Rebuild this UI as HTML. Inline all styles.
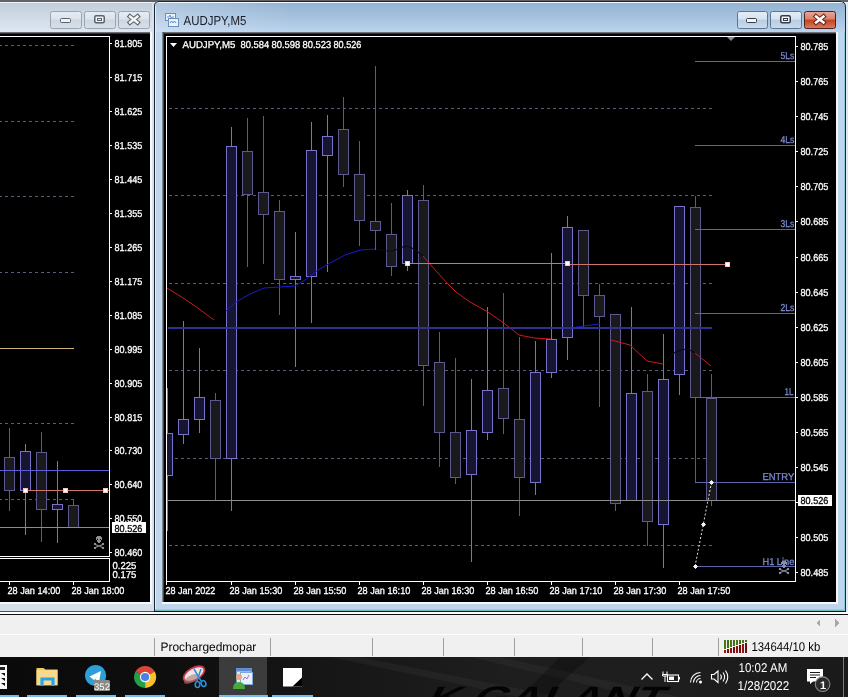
<!DOCTYPE html><html><head><meta charset="utf-8"><style>html,body{margin:0;padding:0;width:848px;height:697px;overflow:hidden;background:#f0f0f0}svg{display:block;will-change:transform}text{font-family:"Liberation Sans",sans-serif;text-rendering:geometricPrecision}</style></head><body>
<svg width="848" height="697" viewBox="0 0 848 697" shape-rendering="crispEdges">
<defs>
<linearGradient id="tbi" x1="0" y1="0" x2="0" y2="1"><stop offset="0" stop-color="#c2cedb"/><stop offset="1" stop-color="#dce7f2"/></linearGradient>
<linearGradient id="tba" x1="0" y1="0" x2="0" y2="1"><stop offset="0" stop-color="#93b4d3"/><stop offset="0.5" stop-color="#a6c2de"/><stop offset="1" stop-color="#bad4ee"/></linearGradient><linearGradient id="tbal" x1="0" y1="0" x2="1" y2="0"><stop offset="0" stop-color="#ffffff" stop-opacity="0.25"/><stop offset="1" stop-color="#ffffff" stop-opacity="0"/></linearGradient>
<linearGradient id="btn" x1="0" y1="0" x2="0" y2="1"><stop offset="0" stop-color="#e6eef7"/><stop offset="0.45" stop-color="#d5e2f0"/><stop offset="0.5" stop-color="#b8cde3"/><stop offset="1" stop-color="#cadbed"/></linearGradient>
<linearGradient id="btni" x1="0" y1="0" x2="0" y2="1"><stop offset="0" stop-color="#e6ecf2"/><stop offset="0.45" stop-color="#dbe3ec"/><stop offset="0.5" stop-color="#cdd7e2"/><stop offset="1" stop-color="#d7e0ea"/></linearGradient>
<linearGradient id="cls" x1="0" y1="0" x2="0" y2="1"><stop offset="0" stop-color="#eaa898"/><stop offset="0.45" stop-color="#d88068"/><stop offset="0.5" stop-color="#c4421e"/><stop offset="1" stop-color="#dc7c60"/></linearGradient>
<linearGradient id="tbar" x1="0" y1="0" x2="1" y2="0"><stop offset="0" stop-color="#0a0a0a"/><stop offset="0.2" stop-color="#0e0e0e"/><stop offset="0.38" stop-color="#161616"/><stop offset="0.6" stop-color="#1e1e1e"/><stop offset="0.8" stop-color="#1e1e1e"/><stop offset="1" stop-color="#1a1a1a"/></linearGradient>
<linearGradient id="shade" x1="0" y1="0" x2="0" y2="1"><stop offset="0" stop-color="#8a9098"/><stop offset="1" stop-color="#101010"/></linearGradient>
<linearGradient id="shadeR" x1="0" y1="0" x2="1" y2="0"><stop offset="0" stop-color="#9aa6b4"/><stop offset="1" stop-color="#20242a"/></linearGradient>
</defs>
<rect x="0" y="0" width="848" height="2" fill="#60646a" />
<rect x="0" y="2" width="154" height="610" fill="#d6e0ea" />
<rect x="0" y="2" width="154" height="1" fill="#f2f5f8" />
<rect x="0" y="3" width="152" height="29" fill="url(#tbi)" />
<rect x="0" y="32" width="150" height="2" fill="url(#shade)" />
<rect x="0" y="34" width="150" height="568" fill="#000" />
<rect x="150" y="32" width="2" height="572" fill="#f6f8fb" />
<rect x="0" y="602" width="152" height="2" fill="#f6f8fb" />
<rect x="152" y="2" width="2" height="610" fill="#d8e2ec" />
<rect x="154" y="6" width="1" height="606" fill="#202428" />
<rect x="0" y="611" width="154" height="1" fill="#4a5058" />
<rect x="50.5" y="11.5" width="31" height="17" rx="2" fill="url(#btni)" stroke="#9aa4b0" shape-rendering="auto"/>
<rect x="84.5" y="11.5" width="31" height="17" rx="2" fill="url(#btni)" stroke="#9aa4b0" shape-rendering="auto"/>
<rect x="118.5" y="11.5" width="31" height="17" rx="2" fill="url(#btni)" stroke="#9aa4b0" shape-rendering="auto"/>
<rect x="60.5" y="18.5" width="10" height="4" rx="1" fill="#f2f2f2" stroke="#5a626c" shape-rendering="auto"/>
<rect x="94.75" y="15.75" width="9.5" height="7" rx="1.5" fill="#f2f2f2" stroke="#5a626c" stroke-width="1.5" shape-rendering="auto"/><rect x="97.5" y="18.5" width="4" height="2" fill="none" stroke="#5a626c" stroke-width="1" shape-rendering="auto"/>
<path d="M130 16.5 L137.5 22.5 M137.5 16.5 L130 22.5" stroke="#5a626c" stroke-width="4.6" stroke-linecap="square" shape-rendering="auto"/><path d="M130 16.5 L137.5 22.5 M137.5 16.5 L130 22.5" stroke="#f6f6f6" stroke-width="2.4" stroke-linecap="square" shape-rendering="auto"/>
<rect x="0" y="36" width="110" height="1" fill="#ffffff" />
<rect x="109" y="36" width="1" height="521" fill="#ffffff" />
<rect x="0" y="556" width="110" height="1" fill="#ffffff" />
<rect x="0" y="558" width="110" height="1" fill="#ffffff" />
<rect x="109" y="558" width="1" height="24" fill="#ffffff" />
<rect x="0" y="581" width="110" height="1" fill="#ffffff" />
<line x1="-1" y1="45.5" x2="75" y2="45.5" stroke="#5c5c7a" stroke-width="1" stroke-dasharray="3 3"/>
<line x1="-1" y1="121.5" x2="75" y2="121.5" stroke="#5c5c7a" stroke-width="1" stroke-dasharray="3 3"/>
<line x1="-1" y1="196.5" x2="75" y2="196.5" stroke="#5c5c7a" stroke-width="1" stroke-dasharray="3 3"/>
<line x1="-1" y1="272.5" x2="75" y2="272.5" stroke="#5c5c7a" stroke-width="1" stroke-dasharray="3 3"/>
<line x1="-1" y1="348.5" x2="75" y2="348.5" stroke="#5c5c7a" stroke-width="1" stroke-dasharray="3 3"/>
<line x1="-1" y1="423.5" x2="75" y2="423.5" stroke="#5c5c7a" stroke-width="1" stroke-dasharray="3 3"/>
<line x1="-1" y1="499.5" x2="75" y2="499.5" stroke="#5c5c7a" stroke-width="1" stroke-dasharray="3 3"/>
<rect x="0" y="348" width="74" height="1" fill="#d0b47c" />
<rect x="9" y="428" width="1" height="30" fill="#5e5a84" />
<rect x="9" y="490" width="1" height="21" fill="#5e5a84" />
<rect x="4" y="457" width="11" height="34" fill="#5e5890" />
<rect x="5" y="458" width="9" height="32" fill="#1a1a1c" />
<rect x="25" y="444" width="1" height="8" fill="#7a72c0" />
<rect x="25" y="490" width="1" height="45" fill="#7a72c0" />
<rect x="20" y="451" width="11" height="40" fill="#7a72c8" />
<rect x="21" y="452" width="9" height="38" fill="#161632" />
<rect x="41" y="432" width="1" height="21" fill="#5e5a84" />
<rect x="41" y="509" width="1" height="33" fill="#5e5a84" />
<rect x="36" y="452" width="11" height="58" fill="#5e5890" />
<rect x="37" y="453" width="9" height="56" fill="#1a1a1c" />
<rect x="57" y="461" width="1" height="44" fill="#7a72c0" />
<rect x="57" y="509" width="1" height="34" fill="#7a72c0" />
<rect x="52" y="504" width="11" height="6" fill="#7a72c8" />
<rect x="53" y="505" width="9" height="4" fill="#161632" />
<rect x="73" y="499" width="1" height="7" fill="#5e5a84" />
<rect x="68" y="505" width="11" height="23" fill="#5e5890" />
<rect x="69" y="506" width="9" height="21" fill="#1a1a1c" />
<rect x="0" y="470" width="109" height="1" fill="#5c5cd8" />
<rect x="25" y="490" width="84" height="1" fill="#d07468" />
<rect x="23" y="488" width="5" height="5" fill="#f0c8c0" />
<rect x="24" y="489" width="3" height="3" fill="#ffffff" />
<rect x="63" y="488" width="5" height="5" fill="#f0c8c0" />
<rect x="64" y="489" width="3" height="3" fill="#ffffff" />
<rect x="103" y="488" width="5" height="5" fill="#f0c8c0" />
<rect x="104" y="489" width="3" height="3" fill="#ffffff" />
<rect x="0" y="527" width="109" height="1" fill="#8c8c8c" />
<rect x="110" y="43" width="2" height="1" fill="#ffffff" />
<rect x="110" y="77" width="2" height="1" fill="#ffffff" />
<rect x="110" y="111" width="2" height="1" fill="#ffffff" />
<rect x="110" y="145" width="2" height="1" fill="#ffffff" />
<rect x="110" y="179" width="2" height="1" fill="#ffffff" />
<rect x="110" y="213" width="2" height="1" fill="#ffffff" />
<rect x="110" y="247" width="2" height="1" fill="#ffffff" />
<rect x="110" y="281" width="2" height="1" fill="#ffffff" />
<rect x="110" y="315" width="2" height="1" fill="#ffffff" />
<rect x="110" y="349" width="2" height="1" fill="#ffffff" />
<rect x="110" y="383" width="2" height="1" fill="#ffffff" />
<rect x="110" y="417" width="2" height="1" fill="#ffffff" />
<rect x="110" y="450" width="2" height="1" fill="#ffffff" />
<rect x="110" y="484" width="2" height="1" fill="#ffffff" />
<rect x="110" y="518" width="2" height="1" fill="#ffffff" />
<rect x="110" y="552" width="2" height="1" fill="#ffffff" />
<rect x="112" y="522" width="34" height="11" fill="#fff" />
<rect x="9" y="582" width="1" height="3" fill="#ffffff" />
<rect x="73" y="582" width="1" height="3" fill="#ffffff" />
<rect x="97" y="536" width="4" height="1" fill="#909090" />
<rect x="96" y="537" width="6" height="3" fill="#909090" />
<rect x="97" y="540" width="4" height="2" fill="#909090" />
<rect x="98" y="542" width="2" height="1" fill="#909090" />
<rect x="97" y="539" width="1" height="1" fill="#000" />
<rect x="100" y="539" width="1" height="1" fill="#000" />
<path d="M94 544 L104 548 M104 544 L94 548" stroke="#909090" stroke-width="1.3" shape-rendering="auto"/>
<rect x="94" y="543" width="2" height="2" fill="#909090" />
<rect x="102" y="543" width="2" height="2" fill="#909090" />
<rect x="94" y="547" width="2" height="2" fill="#909090" />
<rect x="102" y="547" width="2" height="2" fill="#909090" />
<path d="M154 612 L154 6 Q154 1 159 1 L840 1 Q846 1 846 7 L846 612 Z" fill="#bfd5ec" shape-rendering="auto"/>
<rect x="156" y="3" width="689" height="29" fill="url(#tba)" />
<rect x="156" y="3" width="140" height="29" fill="url(#tbal)" />
<rect x="158" y="2" width="684" height="1" fill="#f4f8fc" />
<rect x="155" y="6" width="1" height="605" fill="#e4eef8" />
<rect x="162" y="32" width="674" height="2" fill="url(#shade)" />
<rect x="162" y="32" width="2" height="570" fill="url(#shadeR)" />
<rect x="164" y="34" width="672" height="568" fill="#000" />
<rect x="836" y="32" width="2" height="572" fill="#f6f9fc" />
<rect x="162" y="602" width="676" height="2" fill="#f6f9fc" />
<rect x="155" y="609" width="690" height="1" fill="#a8c8e0" />
<rect x="155" y="610" width="690" height="1" fill="#70bcc4" />
<rect x="844" y="32" width="1" height="579" fill="#90ccd8" />
<path d="M154.5 612 L154.5 6 Q154.5 1.5 159 1.5 L840 1.5 Q845.5 1.5 845.5 7 L845.5 612" fill="none" stroke="#1e2630" shape-rendering="auto"/>
<rect x="154" y="611" width="692" height="1" fill="#081414" />
<rect x="846" y="2" width="2" height="610" fill="#dfe8f1" />
<g shape-rendering="auto"><rect x="165.5" y="13.5" width="10" height="7" fill="#eaf3fc" stroke="#6a90c0"/><path d="M167 17 h2 l1 -2 l1 3 l1 -1 h2" stroke="#5a80b8" fill="none" stroke-width="0.8"/><rect x="168.5" y="18.5" width="10" height="8" fill="#eaf3fc" stroke="#6a90c0"/><path d="M170 23 l1.5 -2 l1.5 2 l1.5 -2 l1.5 2" stroke="#4a70b0" fill="none" stroke-width="0.8"/></g>
<rect x="737.5" y="11.5" width="30" height="17" rx="2" fill="url(#btn)" stroke="#60768e" shape-rendering="auto"/>
<rect x="770.5" y="11.5" width="31" height="17" rx="2" fill="url(#btn)" stroke="#60768e" shape-rendering="auto"/>
<rect x="804.5" y="11.5" width="31" height="17" rx="2" fill="url(#cls)" stroke="#4a2222" shape-rendering="auto"/>
<rect x="746.5" y="18.5" width="10" height="4" rx="1" fill="#f6f6f6" stroke="#333c48" shape-rendering="auto"/>
<rect x="780.75" y="15.75" width="9.5" height="7" rx="1.5" fill="#f4f6f8" stroke="#333c48" stroke-width="1.5" shape-rendering="auto"/><rect x="783.5" y="18.5" width="4" height="2" fill="none" stroke="#333c48" stroke-width="1" shape-rendering="auto"/>
<path d="M816 16.5 L823.5 22.5 M823.5 16.5 L816 22.5" stroke="#6a2a1e" stroke-width="4.6" stroke-linecap="square" shape-rendering="auto"/><path d="M816 16.5 L823.5 22.5 M823.5 16.5 L816 22.5" stroke="#ffffff" stroke-width="2.4" stroke-linecap="square" shape-rendering="auto"/>
<rect x="166" y="36" width="630" height="1" fill="#ffffff" />
<rect x="166" y="36" width="1" height="546" fill="#ffffff" />
<rect x="795" y="36" width="1" height="546" fill="#ffffff" />
<rect x="166" y="581" width="630" height="1" fill="#ffffff" />
<path d="M727 37 L735 37 L731 41 Z" fill="#8a8a8a" shape-rendering="auto"/>
<line x1="169" y1="108.5" x2="712" y2="108.5" stroke="#5c5c7a" stroke-width="1" stroke-dasharray="3 3"/>
<line x1="169" y1="195.5" x2="712" y2="195.5" stroke="#5c5c7a" stroke-width="1" stroke-dasharray="3 3"/>
<line x1="169" y1="283.5" x2="712" y2="283.5" stroke="#5c5c7a" stroke-width="1" stroke-dasharray="3 3"/>
<line x1="169" y1="370.5" x2="712" y2="370.5" stroke="#5c5c7a" stroke-width="1" stroke-dasharray="3 3"/>
<line x1="169" y1="458.5" x2="712" y2="458.5" stroke="#5c5c7a" stroke-width="1" stroke-dasharray="3 3"/>
<line x1="169" y1="545.5" x2="712" y2="545.5" stroke="#5c5c7a" stroke-width="1" stroke-dasharray="3 3"/>
<svg x="167" y="37" width="628" height="544" viewBox="167 37 628 544" overflow="hidden" style="will-change:auto">
<rect x="167" y="388" width="1" height="46" fill="#7a72c0" />
<rect x="167" y="475" width="1" height="56" fill="#7a72c0" />
<rect x="162" y="433" width="11" height="43" fill="#7a72c8" />
<rect x="163" y="434" width="9" height="41" fill="#161632" />
<rect x="183" y="321" width="1" height="99" fill="#7a72c0" />
<rect x="183" y="434" width="1" height="10" fill="#7a72c0" />
<rect x="178" y="419" width="11" height="16" fill="#7a72c8" />
<rect x="179" y="420" width="9" height="14" fill="#161632" />
<rect x="199" y="348" width="1" height="50" fill="#7a72c0" />
<rect x="199" y="419" width="1" height="14" fill="#7a72c0" />
<rect x="194" y="397" width="11" height="23" fill="#7a72c8" />
<rect x="195" y="398" width="9" height="21" fill="#161632" />
<rect x="215" y="393" width="1" height="8" fill="#5e5a84" />
<rect x="215" y="458" width="1" height="43" fill="#5e5a84" />
<rect x="210" y="400" width="11" height="59" fill="#5e5890" />
<rect x="211" y="401" width="9" height="57" fill="#1a1a1c" />
<rect x="231" y="127" width="1" height="20" fill="#7a72c0" />
<rect x="231" y="458" width="1" height="53" fill="#7a72c0" />
<rect x="226" y="146" width="11" height="313" fill="#7a72c8" />
<rect x="227" y="147" width="9" height="311" fill="#161632" />
<rect x="247" y="118" width="1" height="34" fill="#5e5a84" />
<rect x="247" y="194" width="1" height="73" fill="#5e5a84" />
<rect x="242" y="151" width="11" height="44" fill="#5e5890" />
<rect x="243" y="152" width="9" height="42" fill="#1a1a1c" />
<rect x="263" y="116" width="1" height="77" fill="#5e5a84" />
<rect x="263" y="214" width="1" height="50" fill="#5e5a84" />
<rect x="258" y="192" width="11" height="23" fill="#5e5890" />
<rect x="259" y="193" width="9" height="21" fill="#1a1a1c" />
<rect x="279" y="200" width="1" height="12" fill="#5e5a84" />
<rect x="279" y="279" width="1" height="36" fill="#5e5a84" />
<rect x="274" y="211" width="11" height="69" fill="#5e5890" />
<rect x="275" y="212" width="9" height="67" fill="#1a1a1c" />
<rect x="295" y="232" width="1" height="45" fill="#7a72c0" />
<rect x="295" y="279" width="1" height="88" fill="#7a72c0" />
<rect x="290" y="276" width="11" height="4" fill="#7a72c8" />
<rect x="291" y="277" width="9" height="2" fill="#161632" />
<rect x="311" y="122" width="1" height="29" fill="#7a72c0" />
<rect x="311" y="276" width="1" height="47" fill="#7a72c0" />
<rect x="306" y="150" width="11" height="127" fill="#7a72c8" />
<rect x="307" y="151" width="9" height="125" fill="#161632" />
<rect x="327" y="115" width="1" height="22" fill="#7a72c0" />
<rect x="327" y="155" width="1" height="117" fill="#7a72c0" />
<rect x="322" y="136" width="11" height="20" fill="#7a72c8" />
<rect x="323" y="137" width="9" height="18" fill="#161632" />
<rect x="343" y="97" width="1" height="33" fill="#5e5a84" />
<rect x="343" y="174" width="1" height="13" fill="#5e5a84" />
<rect x="338" y="129" width="11" height="46" fill="#5e5890" />
<rect x="339" y="130" width="9" height="44" fill="#1a1a1c" />
<rect x="359" y="141" width="1" height="34" fill="#5e5a84" />
<rect x="359" y="220" width="1" height="26" fill="#5e5a84" />
<rect x="354" y="174" width="11" height="47" fill="#5e5890" />
<rect x="355" y="175" width="9" height="45" fill="#1a1a1c" />
<rect x="375" y="66" width="1" height="156" fill="#5e5a84" />
<rect x="375" y="230" width="1" height="20" fill="#5e5a84" />
<rect x="370" y="221" width="11" height="10" fill="#5e5890" />
<rect x="371" y="222" width="9" height="8" fill="#1a1a1c" />
<rect x="391" y="203" width="1" height="32" fill="#5e5a84" />
<rect x="391" y="266" width="1" height="10" fill="#5e5a84" />
<rect x="386" y="234" width="11" height="33" fill="#5e5890" />
<rect x="387" y="235" width="9" height="31" fill="#1a1a1c" />
<rect x="407" y="190" width="1" height="6" fill="#7a72c0" />
<rect x="407" y="263" width="1" height="8" fill="#7a72c0" />
<rect x="402" y="195" width="11" height="69" fill="#7a72c8" />
<rect x="403" y="196" width="9" height="67" fill="#161632" />
<rect x="423" y="185" width="1" height="16" fill="#5e5a84" />
<rect x="423" y="365" width="1" height="41" fill="#5e5a84" />
<rect x="418" y="200" width="11" height="166" fill="#5e5890" />
<rect x="419" y="201" width="9" height="164" fill="#1a1a1c" />
<rect x="439" y="332" width="1" height="31" fill="#5e5a84" />
<rect x="439" y="432" width="1" height="35" fill="#5e5a84" />
<rect x="434" y="362" width="11" height="71" fill="#5e5890" />
<rect x="435" y="363" width="9" height="69" fill="#1a1a1c" />
<rect x="455" y="358" width="1" height="75" fill="#5e5a84" />
<rect x="455" y="477" width="1" height="7" fill="#5e5a84" />
<rect x="450" y="432" width="11" height="46" fill="#5e5890" />
<rect x="451" y="433" width="9" height="44" fill="#1a1a1c" />
<rect x="471" y="379" width="1" height="52" fill="#7a72c0" />
<rect x="471" y="474" width="1" height="88" fill="#7a72c0" />
<rect x="466" y="430" width="11" height="45" fill="#7a72c8" />
<rect x="467" y="431" width="9" height="43" fill="#161632" />
<rect x="487" y="307" width="1" height="84" fill="#7a72c0" />
<rect x="487" y="432" width="1" height="8" fill="#7a72c0" />
<rect x="482" y="390" width="11" height="43" fill="#7a72c8" />
<rect x="483" y="391" width="9" height="41" fill="#161632" />
<rect x="503" y="293" width="1" height="96" fill="#5e5a84" />
<rect x="503" y="418" width="1" height="16" fill="#5e5a84" />
<rect x="498" y="388" width="11" height="31" fill="#5e5890" />
<rect x="499" y="389" width="9" height="29" fill="#1a1a1c" />
<rect x="519" y="337" width="1" height="83" fill="#5e5a84" />
<rect x="519" y="477" width="1" height="39" fill="#5e5a84" />
<rect x="514" y="419" width="11" height="59" fill="#5e5890" />
<rect x="515" y="420" width="9" height="57" fill="#1a1a1c" />
<rect x="535" y="341" width="1" height="32" fill="#7a72c0" />
<rect x="535" y="482" width="1" height="13" fill="#7a72c0" />
<rect x="530" y="372" width="11" height="111" fill="#7a72c8" />
<rect x="531" y="373" width="9" height="109" fill="#161632" />
<rect x="551" y="253" width="1" height="87" fill="#7a72c0" />
<rect x="551" y="372" width="1" height="6" fill="#7a72c0" />
<rect x="546" y="339" width="11" height="34" fill="#7a72c8" />
<rect x="547" y="340" width="9" height="32" fill="#161632" />
<rect x="567" y="216" width="1" height="12" fill="#7a72c0" />
<rect x="567" y="337" width="1" height="23" fill="#7a72c0" />
<rect x="562" y="227" width="11" height="111" fill="#7a72c8" />
<rect x="563" y="228" width="9" height="109" fill="#161632" />
<rect x="583" y="295" width="1" height="32" fill="#5e5a84" />
<rect x="578" y="230" width="11" height="66" fill="#5e5890" />
<rect x="579" y="231" width="9" height="64" fill="#1a1a1c" />
<rect x="599" y="284" width="1" height="12" fill="#5e5a84" />
<rect x="599" y="316" width="1" height="91" fill="#5e5a84" />
<rect x="594" y="295" width="11" height="22" fill="#5e5890" />
<rect x="595" y="296" width="9" height="20" fill="#1a1a1c" />
<rect x="615" y="503" width="1" height="8" fill="#5e5a84" />
<rect x="610" y="314" width="11" height="190" fill="#5e5890" />
<rect x="611" y="315" width="9" height="188" fill="#1a1a1c" />
<rect x="631" y="307" width="1" height="87" fill="#7a72c0" />
<rect x="626" y="393" width="11" height="108" fill="#7a72c8" />
<rect x="627" y="394" width="9" height="106" fill="#161632" />
<rect x="647" y="374" width="1" height="18" fill="#5e5a84" />
<rect x="647" y="521" width="1" height="25" fill="#5e5a84" />
<rect x="642" y="391" width="11" height="131" fill="#5e5890" />
<rect x="643" y="392" width="9" height="129" fill="#1a1a1c" />
<rect x="663" y="334" width="1" height="46" fill="#7a72c0" />
<rect x="663" y="524" width="1" height="44" fill="#7a72c0" />
<rect x="658" y="379" width="11" height="146" fill="#7a72c8" />
<rect x="659" y="380" width="9" height="144" fill="#161632" />
<rect x="679" y="374" width="1" height="21" fill="#7a72c0" />
<rect x="674" y="206" width="11" height="169" fill="#7a72c8" />
<rect x="675" y="207" width="9" height="167" fill="#161632" />
<rect x="695" y="196" width="1" height="12" fill="#5e5a84" />
<rect x="695" y="397" width="1" height="86" fill="#5e5a84" />
<rect x="690" y="207" width="11" height="191" fill="#5e5890" />
<rect x="691" y="208" width="9" height="189" fill="#1a1a1c" />
<rect x="711" y="374" width="1" height="25" fill="#5e5a84" />
<rect x="711" y="500" width="1" height="6" fill="#5e5a84" />
<rect x="706" y="398" width="11" height="103" fill="#5e5890" />
<rect x="707" y="399" width="9" height="101" fill="#1a1a1c" />
</svg>
<g fill="none" stroke-width="1" shape-rendering="auto">
<polyline stroke="#d01818" points="167,288 180,296 195,306 214,320"/>
<polyline stroke="#1a1ad0" points="226,311 236,302 250,294 264,288 280,287 295,286 305,280 318,270 330,263 345,255 360,250 375,249"/>
<polyline stroke="#d01818" points="423,256 437,272 448,284 456,292 470,302 488,312 505,324 519,335 534,338 551,339"/>
<polyline stroke="#1a1ad0" points="572,328 583,326 600,324"/>
<polyline stroke="#d01818" points="611,340 630,345 647,361 663,364"/>
<polyline stroke="#d01818" points="695,353 711,366"/>
</g>
<g fill="none" stroke-width="1.1" shape-rendering="auto"><polyline stroke="#0a0a14" points="376,249 386,251 393,251 400,248 406,246 412,248 418,252 423,256"/><polyline stroke="#0a0a14" points="664,364 672,354 680,350 688,349 695,353"/></g>
<rect x="168" y="327" width="544" height="2" fill="#30308e" />
<rect x="167" y="500" width="628" height="1" fill="#8c8c8c" />
<rect x="407" y="263" width="161" height="1" fill="#d07468" />
<rect x="568" y="264" width="160" height="1" fill="#d07468" />
<rect x="405" y="261" width="5" height="5" fill="#f0c8c0" />
<rect x="406" y="262" width="3" height="3" fill="#ffffff" />
<rect x="565" y="261" width="5" height="5" fill="#f0c8c0" />
<rect x="566" y="262" width="3" height="3" fill="#ffffff" />
<rect x="725" y="262" width="5" height="5" fill="#f0c8c0" />
<rect x="726" y="263" width="3" height="3" fill="#ffffff" />
<rect x="695" y="61" width="100" height="1" fill="#5c64a8" />
<rect x="695" y="145" width="100" height="1" fill="#5c64a8" />
<rect x="695" y="229" width="100" height="1" fill="#5c64a8" />
<rect x="695" y="313" width="100" height="1" fill="#5c64a8" />
<rect x="695" y="397" width="100" height="1" fill="#5c64a8" />
<rect x="695" y="482" width="100" height="1" fill="#5c64a8" />
<rect x="695" y="566" width="100" height="1" fill="#5c64a8" />
<line x1="695" y1="566.5" x2="711.5" y2="482.5" stroke="#e0e0e0" stroke-width="1" stroke-dasharray="2 2" shape-rendering="auto"/>
<rect x="694" y="565" width="3" height="3" fill="#f4f4f4" />
<rect x="693" y="566" width="1" height="1" fill="#c8c8c8" />
<rect x="697" y="566" width="1" height="1" fill="#c8c8c8" />
<rect x="695" y="564" width="1" height="1" fill="#c8c8c8" />
<rect x="695" y="568" width="1" height="1" fill="#c8c8c8" />
<rect x="702" y="523" width="3" height="3" fill="#f4f4f4" />
<rect x="701" y="524" width="1" height="1" fill="#c8c8c8" />
<rect x="705" y="524" width="1" height="1" fill="#c8c8c8" />
<rect x="703" y="522" width="1" height="1" fill="#c8c8c8" />
<rect x="703" y="526" width="1" height="1" fill="#c8c8c8" />
<rect x="710" y="481" width="3" height="3" fill="#f4f4f4" />
<rect x="709" y="482" width="1" height="1" fill="#c8c8c8" />
<rect x="713" y="482" width="1" height="1" fill="#c8c8c8" />
<rect x="711" y="480" width="1" height="1" fill="#c8c8c8" />
<rect x="711" y="484" width="1" height="1" fill="#c8c8c8" />
<path d="M170 43 L177 43 L173.5 47 Z" fill="#fff" shape-rendering="auto"/>
<rect x="796" y="46" width="2" height="1" fill="#ffffff" />
<rect x="796" y="81" width="2" height="1" fill="#ffffff" />
<rect x="796" y="116" width="2" height="1" fill="#ffffff" />
<rect x="796" y="151" width="2" height="1" fill="#ffffff" />
<rect x="796" y="186" width="2" height="1" fill="#ffffff" />
<rect x="796" y="221" width="2" height="1" fill="#ffffff" />
<rect x="796" y="257" width="2" height="1" fill="#ffffff" />
<rect x="796" y="292" width="2" height="1" fill="#ffffff" />
<rect x="796" y="327" width="2" height="1" fill="#ffffff" />
<rect x="796" y="362" width="2" height="1" fill="#ffffff" />
<rect x="796" y="397" width="2" height="1" fill="#ffffff" />
<rect x="796" y="432" width="2" height="1" fill="#ffffff" />
<rect x="796" y="467" width="2" height="1" fill="#ffffff" />
<rect x="796" y="537" width="2" height="1" fill="#ffffff" />
<rect x="796" y="572" width="2" height="1" fill="#ffffff" />
<rect x="796" y="502" width="2" height="1" fill="#ffffff" />
<rect x="798" y="495" width="34" height="11" fill="#fff" />
<rect x="166" y="582" width="1" height="3" fill="#ffffff" />
<rect x="231" y="582" width="1" height="3" fill="#ffffff" />
<rect x="295" y="582" width="1" height="3" fill="#ffffff" />
<rect x="359" y="582" width="1" height="3" fill="#ffffff" />
<rect x="423" y="582" width="1" height="3" fill="#ffffff" />
<rect x="487" y="582" width="1" height="3" fill="#ffffff" />
<rect x="551" y="582" width="1" height="3" fill="#ffffff" />
<rect x="615" y="582" width="1" height="3" fill="#ffffff" />
<rect x="679" y="582" width="1" height="3" fill="#ffffff" />
<rect x="0" y="612" width="848" height="2" fill="#ffffff" />
<rect x="0" y="614" width="848" height="1" fill="#101010" />
<rect x="0" y="615" width="848" height="19" fill="#f0f0f0" />
<path d="M820 619 L816 623 L820 627 Z" fill="#a8a8a8"/><path d="M835 619 L839 623 L835 627 Z" fill="#a8a8a8"/>
<rect x="0" y="634" width="848" height="1" fill="#ffffff" />
<rect x="0" y="635" width="848" height="22" fill="#f0f0f0" />
<rect x="154" y="638" width="1" height="18" fill="#a0a0a0" />
<rect x="270" y="638" width="1" height="18" fill="#a0a0a0" />
<rect x="372" y="638" width="1" height="18" fill="#a0a0a0" />
<rect x="443" y="638" width="1" height="18" fill="#a0a0a0" />
<rect x="514" y="638" width="1" height="18" fill="#a0a0a0" />
<rect x="582" y="638" width="1" height="18" fill="#a0a0a0" />
<rect x="652" y="638" width="1" height="18" fill="#a0a0a0" />
<rect x="718" y="638" width="1" height="18" fill="#a0a0a0" />
<rect x="724" y="640" width="2" height="9" fill="#3f7a12" />
<rect x="724" y="650" width="2" height="3" fill="#9a1010" />
<rect x="727" y="640" width="2" height="8" fill="#4a6a18" />
<rect x="727" y="649" width="2" height="4" fill="#6a1010" />
<rect x="730" y="640" width="2" height="7" fill="#3f7a12" />
<rect x="730" y="648" width="2" height="5" fill="#9a1010" />
<rect x="733" y="640" width="2" height="6" fill="#4a6a18" />
<rect x="733" y="647" width="2" height="6" fill="#6a1010" />
<rect x="736" y="640" width="2" height="5" fill="#3f7a12" />
<rect x="736" y="646" width="2" height="7" fill="#9a1010" />
<rect x="739" y="640" width="2" height="4" fill="#4a6a18" />
<rect x="739" y="645" width="2" height="8" fill="#6a1010" />
<rect x="742" y="640" width="2" height="3" fill="#3f7a12" />
<rect x="742" y="644" width="2" height="9" fill="#9a1010" />
<rect x="745" y="640" width="2" height="2" fill="#4a6a18" />
<rect x="745" y="643" width="2" height="10" fill="#6a1010" />
<rect x="0" y="657" width="848" height="40" fill="url(#tbar)" />
<g shape-rendering="auto">
<path d="M330 657 L520 697 L560 697 L360 657 Z" fill="#ffffff" opacity="0.035"/>
<path d="M470 657 L640 697 L680 697 L500 657 Z" fill="#ffffff" opacity="0.03"/>
<path d="M560 657 L520 697 L545 697 L590 657 Z" fill="#000000" opacity="0.25"/>
<text x="0" y="0" transform="translate(424 708) skewX(-28)" font-size="31" font-weight="bold" fill="#040404" textLength="236" lengthAdjust="spacingAndGlyphs">K GALANT</text>
</g>
<rect x="219" y="657" width="48" height="40" fill="#3c3c3c" />
<rect x="0" y="695" width="19" height="2" fill="#76b9ed" />
<rect x="27" y="695" width="40" height="2" fill="#76b9ed" />
<rect x="76" y="695" width="40" height="2" fill="#76b9ed" />
<rect x="125" y="695" width="40" height="2" fill="#76b9ed" />
<rect x="219" y="695" width="49" height="2" fill="#76b9ed" />
<rect x="272" y="695" width="41" height="2" fill="#76b9ed" />
<rect x="843" y="657" width="1" height="40" fill="#7a7a7a" />
<g shape-rendering="auto">
<rect x="-6" y="665" width="13" height="24" fill="#f6f6f6"/><rect x="-6" y="667" width="11" height="3" fill="#202020"/><path d="M1 673 h4 v3 z M1 678 h4 v3 z M1 683 h4 v3 z" fill="#101010"/>
<path d="M36.5 668 h7 l2 1.5 h12 v16 h-21 z" fill="#f0c860"/><rect x="36.5" y="670" width="21" height="15" fill="#f8da88"/><path d="M42 686 v-7 h11 v7" stroke="#2aa2ea" stroke-width="3.2" fill="none"/>
<circle cx="95.6" cy="675.6" r="10.6" fill="#2f9fd8"/><path d="M89.5 676.5 L101 671 L99 682 L95.5 679 L94 680 Z" fill="#ffffff"/><path d="M95.5 679 L99 673.5 L94 680 Z" fill="#c8daea"/>
<rect x="94" y="680" width="16" height="11" rx="1.5" fill="#8a8a84"/><text x="102" y="689.5" font-size="9.5" fill="#fff" text-anchor="middle">352</text>
<path d="M145.1 677 L135.49 671.45 A11.1 11.1 0 0 1 154.71 671.45 Z" fill="#dc4437"/>
<path d="M145.1 677 L154.71 671.45 A11.1 11.1 0 0 1 145.10 688.10 Z" fill="#f7c12c"/>
<path d="M145.1 677 L145.10 688.10 A11.1 11.1 0 0 1 135.49 671.45 Z" fill="#23a04a"/>
<circle cx="145.1" cy="677" r="5.2" fill="#ffffff"/><circle cx="145.1" cy="677" r="4.1" fill="#4a80e8"/>
<ellipse cx="194" cy="674" rx="11.5" ry="6" fill="#f4e6e6" stroke="#c83848" stroke-width="1.8" transform="rotate(-30 194 674)"/><ellipse cx="191" cy="679" rx="8" ry="3.5" fill="#9a7070" opacity="0.55" transform="rotate(-30 191 679)"/><path d="M194 669 L201 681 M201 669 L197 681" stroke="#2a8ed8" stroke-width="1.5"/><ellipse cx="197.5" cy="684.5" rx="2.3" ry="3" fill="none" stroke="#2a8ed8" stroke-width="1.6"/><ellipse cx="203.5" cy="683.5" rx="2.3" ry="3" fill="none" stroke="#2a8ed8" stroke-width="1.6" transform="rotate(-20 203.5 683.5)"/>
<rect x="236.5" y="668.5" width="15" height="15" fill="#dce9f6" stroke="#6a9ad8"/><rect x="236.5" y="668.5" width="15" height="3" fill="#5a8ad0"/><rect x="240.5" y="672.5" width="12" height="12" fill="#e8f0fa" stroke="#80a8d8"/><path d="M243 680 l2 -3 l2 2 l2 -4" stroke="#8a70c0" fill="none" stroke-width="0.9"/><circle cx="239" cy="677" r="3" fill="#e8a878"/><path d="M233 689 q0 -7 6 -7 q6 0 6 7 z" fill="#48a838"/>
<rect x="283" y="668" width="19" height="18.5" fill="#ffffff"/><path d="M302 677.5 L302 686.5 L292.5 686.5 Z" fill="#000000"/>
<path d="M641.5 679.5 L647 674 L652.5 679.5" stroke="#ffffff" stroke-width="1.3" fill="none"/>
<rect x="667.5" y="675" width="11" height="6.5" fill="none" stroke="#ffffff" stroke-width="1.1"/><rect x="678.5" y="677" width="1.5" height="2.5" fill="#ffffff"/><rect x="669" y="676.5" width="5" height="3.5" fill="#ffffff"/><path d="M665 676 v6 M663 671.5 v3 M667 671.5 v3 M662.5 674.5 h5 v1.5 h-5 z" stroke="#ffffff" stroke-width="1" fill="none"/>
<path d="M690.5 682.5 A10 10 0 0 1 700.5 672.5 M693.5 682.5 A7 7 0 0 1 700.5 675.5 M696.5 682.5 A4 4 0 0 1 700.5 678.5" stroke="#ffffff" stroke-width="1.1" fill="none"/><circle cx="700.5" cy="682" r="1.5" fill="#ffffff"/>
<path d="M711.5 674.5 h2.5 l4 -3.5 v11.5 l-4 -3.5 h-2.5 z" fill="none" stroke="#ffffff" stroke-width="1.1"/><path d="M720.5 674.5 q1.8 2.5 0 5 M723 672.5 q3.2 4.5 0 9 M725.5 670.5 q4.5 6.5 0 13" stroke="#ffffff" stroke-width="1.1" fill="none"/>
<path d="M807 669 h16 v12.5 h-10 l-3 2.5 v-2.5 h-3 z" fill="#ffffff"/><path d="M810 672.5 h10 M810 675 h10 M810 677.5 h6" stroke="#1a1a1a" stroke-width="1"/><circle cx="822.6" cy="684.2" r="7.3" fill="#2a2a2a" stroke="#8a8a8a" stroke-width="1.1"/><text x="823" y="688.5" font-size="11" font-weight="bold" fill="#ffffff" text-anchor="middle">1</text>
</g>
<text x="114.50" y="47.00" font-size="10" font-weight="normal" fill="#ffffff" stroke="#ffffff" stroke-width="0.3" textLength="27.80" lengthAdjust="spacingAndGlyphs">81.805</text>
<text x="114.50" y="81.00" font-size="10" font-weight="normal" fill="#ffffff" stroke="#ffffff" stroke-width="0.3" textLength="27.80" lengthAdjust="spacingAndGlyphs">81.715</text>
<text x="114.50" y="115.00" font-size="10" font-weight="normal" fill="#ffffff" stroke="#ffffff" stroke-width="0.3" textLength="27.80" lengthAdjust="spacingAndGlyphs">81.625</text>
<text x="114.50" y="149.00" font-size="10" font-weight="normal" fill="#ffffff" stroke="#ffffff" stroke-width="0.3" textLength="27.80" lengthAdjust="spacingAndGlyphs">81.535</text>
<text x="114.50" y="183.00" font-size="10" font-weight="normal" fill="#ffffff" stroke="#ffffff" stroke-width="0.3" textLength="27.80" lengthAdjust="spacingAndGlyphs">81.445</text>
<text x="114.50" y="217.00" font-size="10" font-weight="normal" fill="#ffffff" stroke="#ffffff" stroke-width="0.3" textLength="27.80" lengthAdjust="spacingAndGlyphs">81.355</text>
<text x="114.50" y="251.00" font-size="10" font-weight="normal" fill="#ffffff" stroke="#ffffff" stroke-width="0.3" textLength="27.80" lengthAdjust="spacingAndGlyphs">81.265</text>
<text x="114.50" y="285.00" font-size="10" font-weight="normal" fill="#ffffff" stroke="#ffffff" stroke-width="0.3" textLength="27.80" lengthAdjust="spacingAndGlyphs">81.175</text>
<text x="114.50" y="319.00" font-size="10" font-weight="normal" fill="#ffffff" stroke="#ffffff" stroke-width="0.3" textLength="27.80" lengthAdjust="spacingAndGlyphs">81.085</text>
<text x="114.50" y="353.00" font-size="10" font-weight="normal" fill="#ffffff" stroke="#ffffff" stroke-width="0.3" textLength="27.80" lengthAdjust="spacingAndGlyphs">80.995</text>
<text x="114.50" y="387.00" font-size="10" font-weight="normal" fill="#ffffff" stroke="#ffffff" stroke-width="0.3" textLength="27.80" lengthAdjust="spacingAndGlyphs">80.905</text>
<text x="114.50" y="421.00" font-size="10" font-weight="normal" fill="#ffffff" stroke="#ffffff" stroke-width="0.3" textLength="27.80" lengthAdjust="spacingAndGlyphs">80.815</text>
<text x="114.50" y="454.00" font-size="10" font-weight="normal" fill="#ffffff" stroke="#ffffff" stroke-width="0.3" textLength="27.80" lengthAdjust="spacingAndGlyphs">80.730</text>
<text x="114.50" y="488.00" font-size="10" font-weight="normal" fill="#ffffff" stroke="#ffffff" stroke-width="0.3" textLength="27.80" lengthAdjust="spacingAndGlyphs">80.640</text>
<text x="114.50" y="522.00" font-size="10" font-weight="normal" fill="#ffffff" stroke="#ffffff" stroke-width="0.3" textLength="27.80" lengthAdjust="spacingAndGlyphs">80.550</text>
<text x="114.50" y="556.00" font-size="10" font-weight="normal" fill="#ffffff" stroke="#ffffff" stroke-width="0.3" textLength="27.80" lengthAdjust="spacingAndGlyphs">80.460</text>
<text x="114.50" y="532.00" font-size="10" font-weight="normal" fill="#000000" stroke="#000000" stroke-width="0.3" textLength="27.80" lengthAdjust="spacingAndGlyphs">80.526</text>
<text x="112.50" y="569.00" font-size="10" font-weight="normal" fill="#ffffff" stroke="#ffffff" stroke-width="0.3" textLength="23.80" lengthAdjust="spacingAndGlyphs">0.225</text>
<text x="112.50" y="578.00" font-size="10" font-weight="normal" fill="#ffffff" stroke="#ffffff" stroke-width="0.3" textLength="23.80" lengthAdjust="spacingAndGlyphs">0.175</text>
<text x="7.50" y="594.00" font-size="10" font-weight="normal" fill="#ffffff" stroke="#ffffff" stroke-width="0.3" textLength="52.87" lengthAdjust="spacingAndGlyphs">28 Jan 14:00</text>
<text x="71.50" y="594.00" font-size="10" font-weight="normal" fill="#ffffff" stroke="#ffffff" stroke-width="0.3" textLength="52.87" lengthAdjust="spacingAndGlyphs">28 Jan 18:00</text>
<text x="800.50" y="50.00" font-size="10" font-weight="normal" fill="#ffffff" stroke="#ffffff" stroke-width="0.3" textLength="27.80" lengthAdjust="spacingAndGlyphs">80.785</text>
<text x="800.50" y="85.00" font-size="10" font-weight="normal" fill="#ffffff" stroke="#ffffff" stroke-width="0.3" textLength="27.80" lengthAdjust="spacingAndGlyphs">80.765</text>
<text x="800.50" y="120.00" font-size="10" font-weight="normal" fill="#ffffff" stroke="#ffffff" stroke-width="0.3" textLength="27.80" lengthAdjust="spacingAndGlyphs">80.745</text>
<text x="800.50" y="155.00" font-size="10" font-weight="normal" fill="#ffffff" stroke="#ffffff" stroke-width="0.3" textLength="27.80" lengthAdjust="spacingAndGlyphs">80.725</text>
<text x="800.50" y="190.00" font-size="10" font-weight="normal" fill="#ffffff" stroke="#ffffff" stroke-width="0.3" textLength="27.80" lengthAdjust="spacingAndGlyphs">80.705</text>
<text x="800.50" y="225.00" font-size="10" font-weight="normal" fill="#ffffff" stroke="#ffffff" stroke-width="0.3" textLength="27.80" lengthAdjust="spacingAndGlyphs">80.685</text>
<text x="800.50" y="261.00" font-size="10" font-weight="normal" fill="#ffffff" stroke="#ffffff" stroke-width="0.3" textLength="27.80" lengthAdjust="spacingAndGlyphs">80.665</text>
<text x="800.50" y="296.00" font-size="10" font-weight="normal" fill="#ffffff" stroke="#ffffff" stroke-width="0.3" textLength="27.80" lengthAdjust="spacingAndGlyphs">80.645</text>
<text x="800.50" y="331.00" font-size="10" font-weight="normal" fill="#ffffff" stroke="#ffffff" stroke-width="0.3" textLength="27.80" lengthAdjust="spacingAndGlyphs">80.625</text>
<text x="800.50" y="366.00" font-size="10" font-weight="normal" fill="#ffffff" stroke="#ffffff" stroke-width="0.3" textLength="27.80" lengthAdjust="spacingAndGlyphs">80.605</text>
<text x="800.50" y="401.00" font-size="10" font-weight="normal" fill="#ffffff" stroke="#ffffff" stroke-width="0.3" textLength="27.80" lengthAdjust="spacingAndGlyphs">80.585</text>
<text x="800.50" y="436.00" font-size="10" font-weight="normal" fill="#ffffff" stroke="#ffffff" stroke-width="0.3" textLength="27.80" lengthAdjust="spacingAndGlyphs">80.565</text>
<text x="800.50" y="471.00" font-size="10" font-weight="normal" fill="#ffffff" stroke="#ffffff" stroke-width="0.3" textLength="27.80" lengthAdjust="spacingAndGlyphs">80.545</text>
<text x="800.50" y="541.00" font-size="10" font-weight="normal" fill="#ffffff" stroke="#ffffff" stroke-width="0.3" textLength="27.80" lengthAdjust="spacingAndGlyphs">80.505</text>
<text x="800.50" y="576.00" font-size="10" font-weight="normal" fill="#ffffff" stroke="#ffffff" stroke-width="0.3" textLength="27.80" lengthAdjust="spacingAndGlyphs">80.485</text>
<text x="800.50" y="504.00" font-size="10" font-weight="normal" fill="#000000" stroke="#000000" stroke-width="0.3" textLength="27.80" lengthAdjust="spacingAndGlyphs">80.526</text>
<text x="182.50" y="48.00" font-size="10" font-weight="normal" fill="#ffffff" stroke="#ffffff" stroke-width="0.3" textLength="52.89" lengthAdjust="spacingAndGlyphs">AUDJPY,M5</text>
<text x="240.50" y="48.00" font-size="10" font-weight="normal" fill="#ffffff" stroke="#ffffff" stroke-width="0.3" textLength="28.80" lengthAdjust="spacingAndGlyphs">80.584</text>
<text x="271.50" y="48.00" font-size="10" font-weight="normal" fill="#ffffff" stroke="#ffffff" stroke-width="0.3" textLength="28.80" lengthAdjust="spacingAndGlyphs">80.598</text>
<text x="302.50" y="48.00" font-size="10" font-weight="normal" fill="#ffffff" stroke="#ffffff" stroke-width="0.3" textLength="28.80" lengthAdjust="spacingAndGlyphs">80.523</text>
<text x="333.50" y="48.00" font-size="10" font-weight="normal" fill="#ffffff" stroke="#ffffff" stroke-width="0.3" textLength="27.80" lengthAdjust="spacingAndGlyphs">80.526</text>
<text x="165.50" y="594.00" font-size="10" font-weight="normal" fill="#ffffff" stroke="#ffffff" stroke-width="0.3" textLength="49.80" lengthAdjust="spacingAndGlyphs">28 Jan 2022</text>
<text x="229.50" y="594.00" font-size="10" font-weight="normal" fill="#ffffff" stroke="#ffffff" stroke-width="0.3" textLength="52.80" lengthAdjust="spacingAndGlyphs">28 Jan 15:30</text>
<text x="293.50" y="594.00" font-size="10" font-weight="normal" fill="#ffffff" stroke="#ffffff" stroke-width="0.3" textLength="52.80" lengthAdjust="spacingAndGlyphs">28 Jan 15:50</text>
<text x="357.50" y="594.00" font-size="10" font-weight="normal" fill="#ffffff" stroke="#ffffff" stroke-width="0.3" textLength="52.80" lengthAdjust="spacingAndGlyphs">28 Jan 16:10</text>
<text x="421.50" y="594.00" font-size="10" font-weight="normal" fill="#ffffff" stroke="#ffffff" stroke-width="0.3" textLength="52.80" lengthAdjust="spacingAndGlyphs">28 Jan 16:30</text>
<text x="485.50" y="594.00" font-size="10" font-weight="normal" fill="#ffffff" stroke="#ffffff" stroke-width="0.3" textLength="52.80" lengthAdjust="spacingAndGlyphs">28 Jan 16:50</text>
<text x="549.50" y="594.00" font-size="10" font-weight="normal" fill="#ffffff" stroke="#ffffff" stroke-width="0.3" textLength="52.80" lengthAdjust="spacingAndGlyphs">28 Jan 17:10</text>
<text x="613.50" y="594.00" font-size="10" font-weight="normal" fill="#ffffff" stroke="#ffffff" stroke-width="0.3" textLength="52.80" lengthAdjust="spacingAndGlyphs">28 Jan 17:30</text>
<text x="677.50" y="594.00" font-size="10" font-weight="normal" fill="#ffffff" stroke="#ffffff" stroke-width="0.3" textLength="52.80" lengthAdjust="spacingAndGlyphs">28 Jan 17:50</text>
<text x="780.50" y="59.00" font-size="10" font-weight="normal" fill="#7888cc" stroke="#7888cc" stroke-width="0.3" textLength="13.80" lengthAdjust="spacingAndGlyphs">5Ls</text>
<text x="780.50" y="143.00" font-size="10" font-weight="normal" fill="#7888cc" stroke="#7888cc" stroke-width="0.3" textLength="13.80" lengthAdjust="spacingAndGlyphs">4Ls</text>
<text x="780.50" y="227.00" font-size="10" font-weight="normal" fill="#7888cc" stroke="#7888cc" stroke-width="0.3" textLength="13.80" lengthAdjust="spacingAndGlyphs">3Ls</text>
<text x="780.50" y="311.00" font-size="10" font-weight="normal" fill="#7888cc" stroke="#7888cc" stroke-width="0.3" textLength="13.80" lengthAdjust="spacingAndGlyphs">2Ls</text>
<text x="784.50" y="395.00" font-size="10" font-weight="normal" fill="#7888cc" stroke="#7888cc" stroke-width="0.3" textLength="8.82" lengthAdjust="spacingAndGlyphs">1L</text>
<text x="762.50" y="480.00" font-size="10" font-weight="normal" fill="#7888cc" stroke="#7888cc" stroke-width="0.3" textLength="31.80" lengthAdjust="spacingAndGlyphs">ENTRY</text>
<text x="762.50" y="565.00" font-size="10" font-weight="normal" fill="#7888cc" stroke="#7888cc" stroke-width="0.3" textLength="31.80" lengthAdjust="spacingAndGlyphs">H1 Line</text>
<text x="183.50" y="25.00" font-size="13" font-weight="normal" fill="#1a1e28" stroke="#1a1e28" stroke-width="0.0" textLength="62.80" lengthAdjust="spacingAndGlyphs">AUDJPY,M5</text>
<text x="160.50" y="651.00" font-size="12.3" font-weight="normal" fill="#000000" stroke="#000000" stroke-width="0.0" textLength="95.80" lengthAdjust="spacingAndGlyphs">Prochargedmopar</text>
<text x="751.50" y="651.00" font-size="12.6" font-weight="normal" fill="#000000" stroke="#000000" stroke-width="0.0" textLength="68.80" lengthAdjust="spacingAndGlyphs">134644/10 kb</text>
<text x="738.50" y="672.00" font-size="12.8" font-weight="normal" fill="#ffffff" stroke="#ffffff" stroke-width="0.0" textLength="48.80" lengthAdjust="spacingAndGlyphs">10:02 AM</text>
<text x="737.50" y="690.00" font-size="12.8" font-weight="normal" fill="#ffffff" stroke="#ffffff" stroke-width="0.0" textLength="51.80" lengthAdjust="spacingAndGlyphs">1/28/2022</text>
<rect x="782" y="561" width="4" height="1" fill="#8890a8" />
<rect x="781" y="562" width="6" height="3" fill="#8890a8" />
<rect x="782" y="565" width="4" height="2" fill="#8890a8" />
<rect x="783" y="567" width="2" height="1" fill="#8890a8" />
<rect x="782" y="564" width="1" height="1" fill="#000" />
<rect x="785" y="564" width="1" height="1" fill="#000" />
<path d="M779 569 L789 573 M789 569 L779 573" stroke="#8890a8" stroke-width="1.3" shape-rendering="auto"/>
<rect x="779" y="568" width="2" height="2" fill="#8890a8" />
<rect x="787" y="568" width="2" height="2" fill="#8890a8" />
<rect x="779" y="572" width="2" height="2" fill="#8890a8" />
<rect x="787" y="572" width="2" height="2" fill="#8890a8" />
</svg></body></html>
